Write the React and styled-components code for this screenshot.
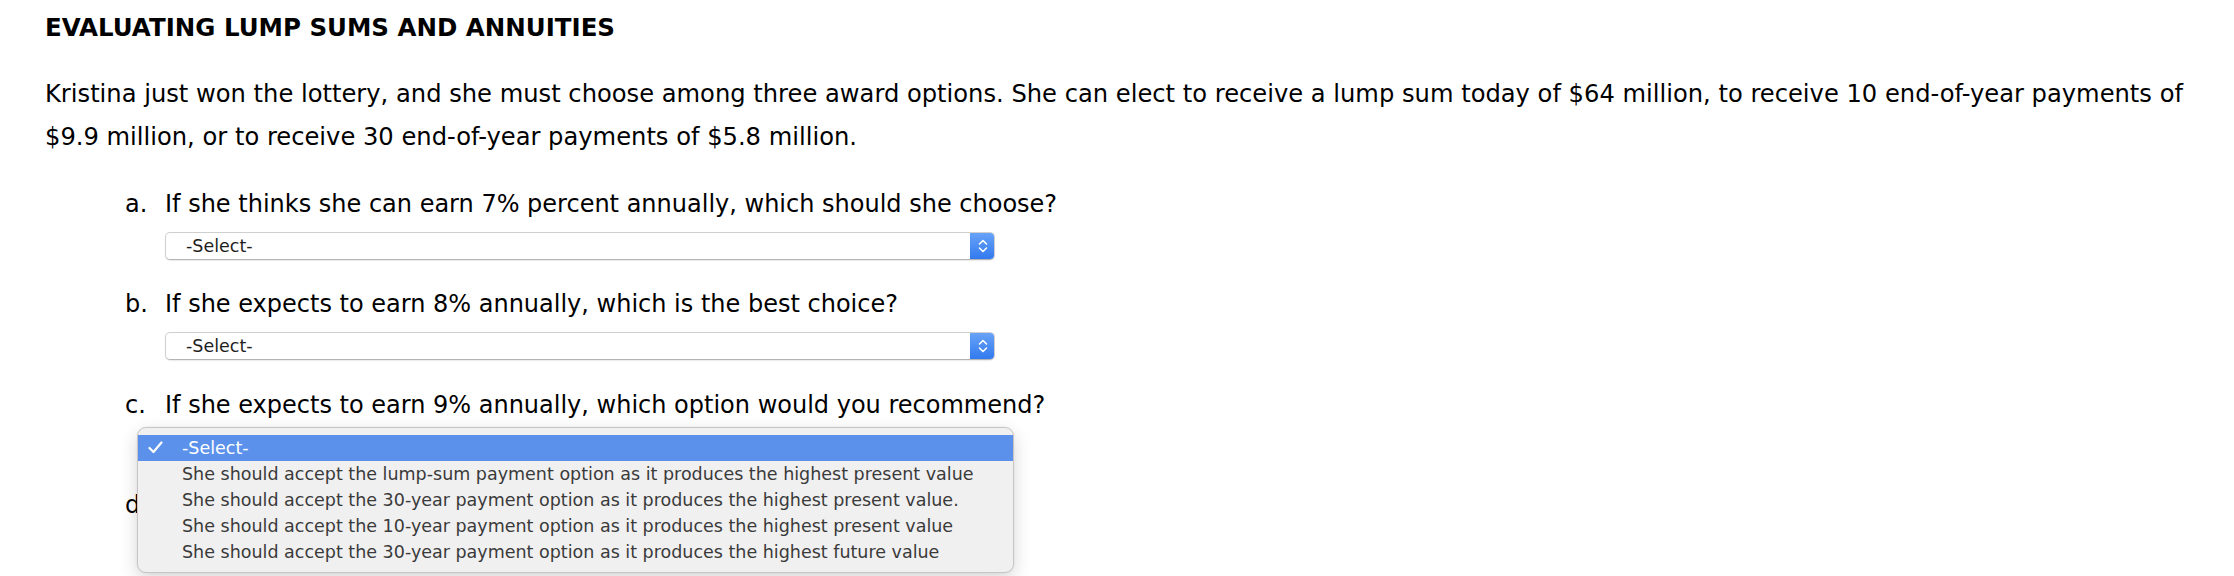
import React from 'react';
import styled, { createGlobalStyle } from 'styled-components';

const Global = createGlobalStyle`
  body {
    margin: 0;
    background: #fff;
    color: #000;
    font-family: "DejaVu Sans", Verdana, sans-serif;
  }
`;

const Page = styled.div`
  box-sizing: border-box;
  min-height: 576px;
  padding: 0 40px 0 45px;
  overflow: hidden;
`;

const Title = styled.h1`
  margin: 0;
  padding-top: 13px;
  font-size: 24.5px;
  line-height: 30px;
  font-weight: bold;
`;

const Intro = styled.p`
  margin: 30px 0 0;
  font-size: 24.2px;
  line-height: 43px;
`;

const Questions = styled.ol`
  list-style: none;
  margin: 29.5px 0 0;
  padding: 0;
`;

const Item = styled.li`
  margin-top: ${(p) => (p.$first ? '0' : '29.5px')};
`;

const Prompt = styled.div`
  display: flex;
  font-size: 24px;
  line-height: 30px;
  padding-left: 80px;
`;

const Letter = styled.span`
  width: 40px;
  flex: none;
`;

const Field = styled.div`
  position: relative;
  margin: 13px 0 0 120px;
  width: 830px;
`;

const SelectBox = styled.div`
  display: flex;
  align-items: center;
  height: 28px;
  box-sizing: border-box;
  background: #fff;
  border: 1px solid #cfcfcf;
  border-bottom-color: #b4b4b4;
  border-radius: 5px;
  box-shadow: 0 1px 1px rgba(0, 0, 0, 0.08);
  overflow: hidden;
`;

const SelectText = styled.span`
  flex: 1;
  padding-left: 20px;
  font-size: 17.5px;
  color: #1e1e1e;
`;

const Stepper = styled.span`
  display: flex;
  align-items: center;
  justify-content: center;
  width: 25px;
  align-self: stretch;
  margin: -1px -1px -1px 0;
  background: linear-gradient(#6aa4f8, #2f78ee);
  border-radius: 0 5px 5px 0;
`;

const Menu = styled.ul`
  position: absolute;
  left: -28px;
  top: -6px;
  width: 877px;
  box-sizing: border-box;
  margin: 0;
  padding: 7px 0;
  list-style: none;
  background: #f0f0f1;
  border: 1px solid #c6c6c6;
  border-radius: 9px;
  box-shadow: 0 6px 18px rgba(0, 0, 0, 0.16), 0 0 2px rgba(0, 0, 0, 0.08);
  z-index: 2;
`;

const Option = styled.li`
  display: flex;
  align-items: center;
  height: 26px;
  padding-left: 10px;
  font-size: 17.5px;
  line-height: 26px;
  white-space: nowrap;
  color: ${(p) => (p.$active ? '#fff' : '#3a3a3a')};
  background: ${(p) => (p.$active ? '#5b91ea' : 'transparent')};
`;

const Check = styled.span`
  display: flex;
  width: 34px;
  flex: none;
`;

function Arrows() {
  return (
    <svg width="12" height="16" viewBox="0 0 12 16">
      <path d="M2.5 6 L6 2.5 L9.5 6 M2.5 10 L6 13.5 L9.5 10" fill="none" stroke="#fff" strokeWidth="1.6" strokeLinecap="round" strokeLinejoin="round" />
    </svg>
  );
}

function Tick() {
  return (
    <svg width="15" height="13" viewBox="0 0 15 13">
      <path d="M1.5 7 L5.5 11 L13.5 1.5" fill="none" stroke="#fff" strokeWidth="2.2" strokeLinecap="round" strokeLinejoin="round" />
    </svg>
  );
}

const choices = [
  '-Select-',
  'She should accept the lump-sum payment option as it produces the highest present value',
  'She should accept the 30-year payment option as it produces the highest present value.',
  'She should accept the 10-year payment option as it produces the highest present value',
  'She should accept the 30-year payment option as it produces the highest future value',
];

// d. sits under the open menu; only its letter shows
const questions = [
  ['a.', 'If she thinks she can earn 7% percent annually, which should she choose?'],
  ['b.', 'If she expects to earn 8% annually, which is the best choice?'],
  ['c.', 'If she expects to earn 9% annually, which option would you recommend?'],
  ['d.', ''],
];

function Select({ open }) {
  return (
    <Field>
      <SelectBox>
        <SelectText>-Select-</SelectText>
        <Stepper><Arrows /></Stepper>
      </SelectBox>
      {open && (
        <Menu>
          {choices.map((c, i) => (
            <Option key={c} $active={i === 0}>
              <Check>{i === 0 && <Tick />}</Check>
              {c}
            </Option>
          ))}
        </Menu>
      )}
    </Field>
  );
}

export default function App() {
  return (
    <>
      <Global />
      <Page>
        <Title>EVALUATING LUMP SUMS AND ANNUITIES</Title>
        <Intro>
          Kristina just won the lottery, and she must choose among three award options. She can elect to receive a lump
          sum today of $64 million, to receive 10 end-of-year payments of $9.9 million, or to receive 30 end-of-year
          payments of $5.8 million.
        </Intro>
        <Questions>
          {questions.map(([l, q], i) => (
            <Item key={l} $first={i === 0}>
              <Prompt>
                <Letter>{l}</Letter>
                <span>{q}</span>
              </Prompt>
              {q && <Select open={i === 2} />}
            </Item>
          ))}
        </Questions>
      </Page>
    </>
  );
}
